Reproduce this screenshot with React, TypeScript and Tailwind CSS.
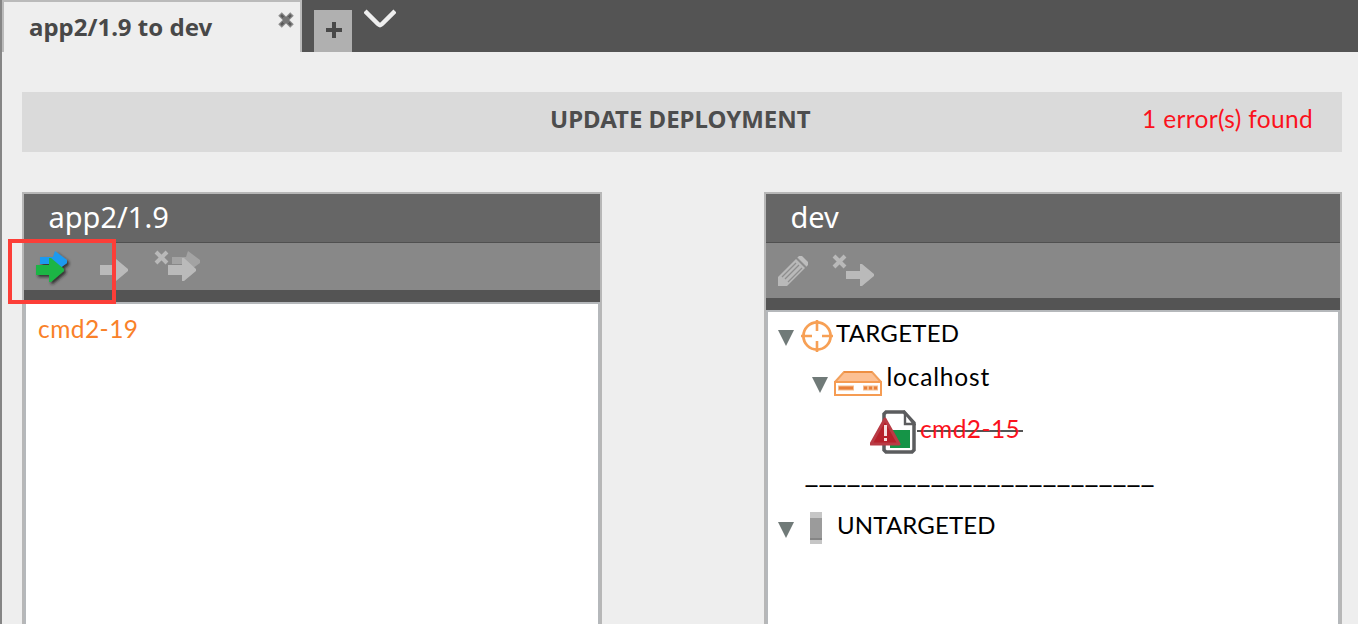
import React from "react";

function Arrow({ fill, className = "" }: { fill: string; className?: string }) {
  return (
    <svg className={className} width="28" height="22" viewBox="0 0 28 22">
      <path d="M0 6h14V0h2l12 10v2L16 22h-2v-6H0z" fill={fill} />
    </svg>
  );
}

function Triangle({ className = "" }: { className?: string }) {
  return (
    <svg className={`shrink-0 ${className}`} width="16" height="16" viewBox="0 0 16 16">
      <path d="M0 0h16L8 16z" fill="#707a78" />
    </svg>
  );
}

function DeployAll() {
  return (
    <svg width="38" height="36" viewBox="0 0 38 36" className="overflow-visible">
      <defs>
        <filter id="shadow" x="-30%" y="-30%" width="160%" height="170%">
          <feDropShadow dx="2" dy="2" stdDeviation="1.8" floodColor="#222" floodOpacity=".85" />
        </filter>
      </defs>
      <g filter="url(#shadow)">
        <path d="M5 7h13l2-6 12 9v3l-11 8V14H5z" fill="#1b9af0" />
        <path d="M1 15h13V8h2l13 11v2L16 32h-2v-7H1z" fill="#1cb545" />
      </g>
    </svg>
  );
}

function UndeployAll() {
  return (
    <svg width="48" height="32" viewBox="0 0 48 32">
      <path d="M2 2l11 11M13 2L2 13" stroke="#b9b9b9" strokeWidth="4" />
      <path d="M18 7h14l2-6 12 9v3l-11 8V14H18z" fill="#a3a3a3" />
      <path d="M14 15h14V8h2l12 11v2L30 31h-2v-6H14z" fill="#bababa" />
    </svg>
  );
}

function Undeploy() {
  return (
    <svg width="44" height="32" viewBox="0 0 44 32">
      <path d="M2 2l11 11M13 2L2 13" stroke="#b9b9b9" strokeWidth="4" />
      <path d="M14 17h14v-7h2l12 10v2L30 32h-2v-7H14z" fill="#bababa" />
    </svg>
  );
}

function Pencil() {
  return (
    <svg width="32" height="32" viewBox="0 0 32 32">
      <path d="M1 31V22L19 4l9 9-18 18z" fill="#b9b9b9" />
      <path d="M20 3l2-2h3l6 6v3l-2 2z" fill="#bdbdbd" />
      <path d="M5 22L19 8M8 24L22 10M11 27L25 13M20 3l9 9" stroke="#8e8e8e" strokeWidth="1.300" />
    </svg>
  );
}

function Target() {
  return (
    <svg width="32" height="32" viewBox="0 0 32 32" fill="none" stroke="#f7a055">
      <circle cx="16" cy="16" r="13.600" strokeWidth="2.800" />
      <path d="M16 0v11M16 21v11M0 16h11M21 16h11" strokeWidth="2.600" />
    </svg>
  );
}

function Server() {
  return (
    <svg width="48" height="26" viewBox="0 0 48 26">
      <path d="M1 12L10 2h28l9 10z" fill="#fcc093" stroke="#f2a05c" strokeWidth="2" />
      <path d="M10 2h28" stroke="#ee8f42" strokeWidth="2" />
      <path d="M1 12h46v13H1z" fill="#fff" stroke="#f59c53" strokeWidth="2" />
      <path d="M4 18h16M29 18h15" stroke="#f7bd8c" strokeWidth="5" />
      <path d="M5 18h14M30 18h3M35 18h3M40 18h3" stroke="#e9803a" strokeWidth="3" />
    </svg>
  );
}

function ErrorDocument() {
  return (
    <svg width="46" height="44" viewBox="0 0 46 44">
      <path d="M16 2h18L44 13v27l-2 2H16l-2-2V4z" fill="#fff" stroke="#5b5c5e" strokeWidth="3.500" />
      <path d="M35 3v11h9z" fill="#fff" stroke="#5b5c5e" strokeWidth="2.400" />
      <path d="M20 20h20v18H20z" fill="#159447" />
      <path d="M15 9L29 34H1z" fill="#b6202b" stroke="#b93b45" strokeWidth="3" strokeLinejoin="round" />
      <path d="M15.500 15v11M15.500 28v3" stroke="#f5dfe0" strokeWidth="3" />
    </svg>
  );
}

function Cartridge() {
  return (
    <svg width="12" height="32" viewBox="0 0 12 32">
      <path d="M0 0h12v32H0z" fill="#c6c6c6" />
      <path d="M0 6h12v22H0z" fill="#9b9b9b" />
      <path d="M0 26h12v2H0z" fill="#858585" />
    </svg>
  );
}

function Panel({ title, tools, toolHeight, children }: { title: string; tools: React.ReactNode; toolHeight: string; children: React.ReactNode }) {
  return (
    <section className="flex h-[440px] flex-col border-2 border-b-0 border-[#b7b7b7]">
      <h2 className="h-[49px] shrink-0 border-b border-[#505050] bg-[#666] pl-[24.5px] font-['Noto_Sans',sans-serif] text-[29px] leading-[46px] text-white">{title}</h2>
      <div className={`${toolHeight} shrink-0 bg-[#888]`}>{tools}</div>
      <div className="h-3 shrink-0 bg-[#545454]" />
      <div className="grow border-x-2 border-t-2 border-[#b5b8bb] bg-white">{children}</div>
    </section>
  );
}

export default function App() {
  return (
    <div className="relative h-[624px] w-[1358px] overflow-hidden border-l-2 border-[#858585] bg-[#eee] font-['Lato',sans-serif] whitespace-nowrap">
      <header className="flex h-[52px] items-start bg-[#545454]">
        <div className="flex h-[52px] w-[300px] justify-between border-2 border-b-0 border-[#bababa] bg-[#eee] pr-[6px] pl-[25px]">
          <span className="pt-2 font-['Noto_Sans','Open_Sans',sans-serif] text-[24px] leading-[34px] font-bold text-[#484848]">app2/1.9 to dev</span>
          <svg className="mt-[10px]" width="16" height="16" viewBox="0 0 16 16">
            <path d="M2 2l12 12M14 2L2 14" stroke="#8c8c8c" strokeWidth="5" />
            <path d="M3 3l10 10M13 3L3 13" stroke="#5a5a5a" strokeWidth="2.500" />
            <path d="M5 5h6v6H5z" fill="#777" />
          </svg>
        </div>
        <button className="mt-[10px] ml-3 flex h-[42px] w-[38px] justify-center bg-[#b0b0b0] pt-3">
          <svg className="ml-px" width="16" height="16" viewBox="0 0 16 16"><path d="M8 0v16M0 8h16" stroke="#484848" strokeWidth="4" /></svg>
        </button>
        <svg className="mt-2 ml-3" width="32" height="20" viewBox="0 0 32 20">
          <path d="M1 3l13 13q2 2 4 0L31 3" fill="none" stroke="#eee" strokeWidth="4.500" />
        </svg>
      </header>

      <main className="pt-10 pr-4 pl-5">
        <div className="grid h-[60px] grid-cols-[528px_1fr_auto] bg-[#dadada] pr-[29px] leading-[54px]">
          <h1 className="col-start-2 font-['Noto_Sans','Open_Sans',sans-serif] text-[24px] font-bold text-[#4d4d4d]">UPDATE DEPLOYMENT</h1>
          <span className="text-[24.5px] tracking-[0.33px] text-[#fb121d]">1 error(s) found</span>
        </div>

        <div className="mt-10 grid grid-cols-[580px_578px] gap-[162px]">
          <Panel
            title="app2/1.9"
            toolHeight="h-[47px]"
            tools={
              <div className="flex items-start pl-[11px]">
                <div className="pt-[7px]"><DeployAll /></div>
                <Arrow className="mt-4 ml-[27px]" fill="#bababa" />
                <div className="mt-[7px] ml-[26px]"><UndeployAll /></div>
              </div>
            }
          >
            <span className="block pt-[9px] pl-3 text-[24.5px] leading-8 tracking-[0.45px] text-[#f98129]">cmd2-19</span>
          </Panel>
          <Panel
            title="dev"
            toolHeight="h-[55px]"
            tools={
              <div className="flex items-start pt-3 pl-[11px]">
                <Pencil />
                <div className="-mt-px ml-[23px]"><Undeploy /></div>
              </div>
            }
          >
            <div className="flex flex-col text-[24px] leading-8 text-black">
              <div className="flex h-12 pt-[5px] pl-[10px]">
                <Triangle className="mt-[13px]" />
                <div className="mt-[3px] ml-[7px]"><Target /></div>
                <span className="ml-[3px] tracking-[0.25px]">TARGETED</span>
              </div>
              <div className="flex h-12 pt-px pl-[44px]">
                <Triangle className="mt-4" />
                <div className="mt-[9px] ml-[6px]"><Server /></div>
                <span className="ml-[4.5px] text-[24.5px] tracking-[0.8px]">localhost</span>
              </div>
              <div className="flex h-12 pt-[2px] pl-[102px]">
                <ErrorDocument />
                <span className="mt-[3px] ml-px h-8 bg-[linear-gradient(#555,#555)] bg-[length:100%_2px] bg-[position:0_17px] bg-no-repeat pr-[3px] pl-[3px] text-[24.5px] tracking-[0.4px] text-[#fb121d]">cmd2-15</span>
              </div>
              <div className="-mt-px h-[49px] pl-[36.5px] text-[30.5px]">_________________________</div>
              <div className="flex h-12 pt-[5px] pl-[10px]">
                <Triangle className="mt-[13px]" />
                <div className="mt-[3px] ml-4"><Cartridge /></div>
                <span className="ml-[15px] tracking-[0.15px]">UNTARGETED</span>
              </div>
            </div>
          </Panel>
        </div>
      </main>
      <div className="absolute top-[239px] left-[6px] h-[65px] w-[108px] border-4 border-[#fc3e38]" />
    </div>
  );
}
